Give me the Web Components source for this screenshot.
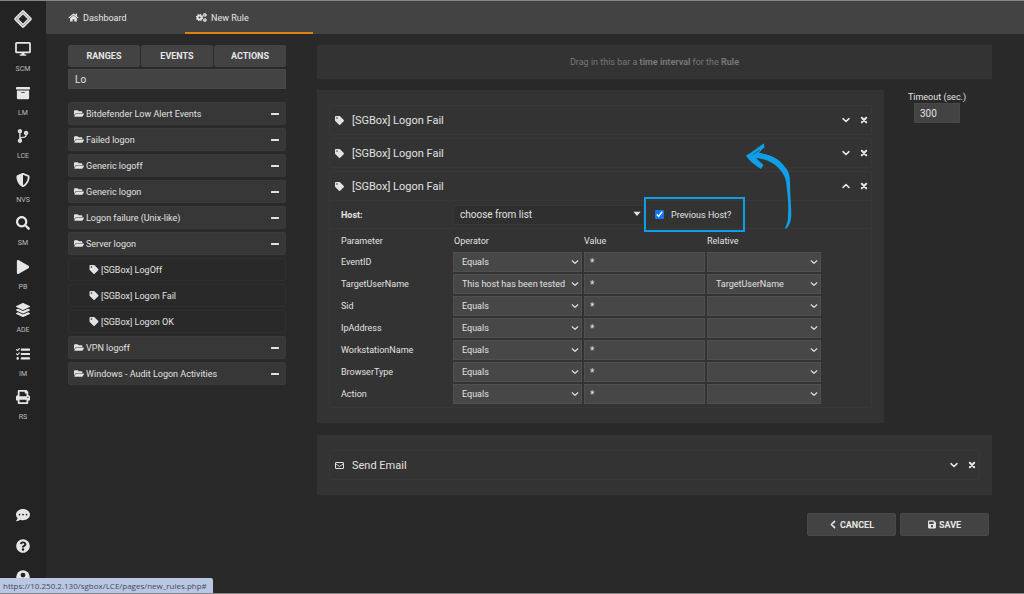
<!DOCTYPE html>
<html lang="en">
<head>
<meta charset="utf-8">
<title>New Rule</title>
<style>
  html, body { margin: 0; background: #292929; }
  body { font: 9px/12px Roboto, sans-serif; color: #e2e2e2; }
</style>
</head>
<body>
<rule-app></rule-app>
<script>
const define = (name, html, setup) => {
  const template = document.createElement('template');
  template.innerHTML = html;
  customElements.define(name, class extends HTMLElement {
    constructor() {
      super();
      this.attachShadow({ mode: 'open' }).append(template.content.cloneNode(true));
    }
    connectedCallback() { if (setup) setup(this, this.shadowRoot); }
  });
};

const gear = (x, y, r, teeth) => {
  const step = 2 * Math.PI * r / teeth;
  return `<circle cx="${x}" cy="${y}" r="${r}" fill="none" stroke="currentColor" stroke-width="${r * .5}" stroke-dasharray="${step * .55} ${step * .45}"/>
    <circle cx="${x}" cy="${y}" r="${r * .68}" fill="none" stroke="currentColor" stroke-width="${r * .62}"/>`;
};
const path = d => `<path d="${d}"/>`;
const line = (d, w) => `<path d="${d}" fill="none" stroke="currentColor" stroke-width="${w}" stroke-linecap="round" stroke-linejoin="round"/>`;

const ICONS = {
  logo: ['0 0 20 20', '<path d="M10 3 17 10 10 17 3 10Z" fill="none" stroke="currentColor" stroke-width="3.6" stroke-linejoin="round"/><path d="M10 3.2 16.8 10 10 16.8 3.2 10Z" fill="none" stroke="#6a6a6a" stroke-width=".6"/>'],
  desktop: ['0 0 576 512', '<rect x="32" y="32" width="512" height="350" rx="24" fill="none" stroke="currentColor" stroke-width="64"/><path d="M240 400h96l16 60h56v44H168v-44h56z"/>'],
  archive: ['0 0 512 512', path('M32 448c0 17.7 14.3 32 32 32h384c17.7 0 32-14.3 32-32V160H32v288zm160-212c0-6.6 5.4-12 12-12h104c6.6 0 12 5.4 12 12v8c0 6.6-5.4 12-12 12H204c-6.6 0-12-5.4-12-12v-8zM480 32H32C14.3 32 0 46.3 0 64v48c0 8.8 7.2 16 16 16h480c8.8 0 16-7.2 16-16V64c0-17.7-14.3-32-32-32z')],
  branch: ['0 0 384 512', path('M384 144c0-44.2-35.8-80-80-80s-80 35.8-80 80c0 36.4 24.3 67.1 57.5 76.8-.6 16.1-4.2 28.5-11 36.9-15.4 19.2-49.3 22.4-85.2 25.7-28.2 2.6-57.4 5.4-81.3 16.9v-144c32.5-10.2 56-40.5 56-76.3 0-44.2-35.8-80-80-80S0 35.8 0 80c0 35.8 23.5 66.1 56 76.3v199.3C23.5 365.9 0 396.2 0 432c0 44.2 35.8 80 80 80s80-35.8 80-80c0-34-21.2-63.1-51.2-74.6 3.1-5.2 7.8-9.8 14.9-13.4 16.2-8.2 40.4-10.4 66.1-12.8 42.2-3.9 90-8.4 118.2-43.4 14-17.4 21.1-39.8 21.6-67.9 31.6-10.8 54.4-40.7 54.4-75.9zM80 64c8.8 0 16 7.2 16 16s-7.2 16-16 16-16-7.2-16-16 7.2-16 16-16zm0 384c-8.8 0-16-7.2-16-16s7.2-16 16-16 16 7.2 16 16-7.2 16-16 16zm224-320c8.8 0 16 7.2 16 16s-7.2 16-16 16-16-7.2-16-16 7.2-16 16-16z')],
  shield: ['0 0 512 512', path('M466.5 83.7l-192-80a48.15 48.15 0 0 0-36.9 0l-192 80C27.7 91.1 16 108.6 16 128c0 198.5 114.5 335.7 221.5 380.3 11.8 4.9 25.1 4.9 36.9 0C360.1 472.6 496 349.3 496 128c0-19.4-11.7-36.9-29.5-44.3zM256.1 446.3l-.1-381 175.9 73.3c-3.3 151.4-82.1 261.1-175.8 307.7z')],
  search: ['0 0 512 512', path('M505 442.7L405.3 343c-4.5-4.5-10.6-7-17-7H372c27.6-35.3 44-79.7 44-128C416 93.1 322.9 0 208 0S0 93.1 0 208s93.1 208 208 208c48.3 0 92.7-16.4 128-44v16.3c0 6.4 2.5 12.5 7 17l99.7 99.7c9.4 9.4 24.6 9.4 33.9 0l28.3-28.3c9.4-9.4 9.4-24.6.1-34zM208 336c-70.7 0-128-57.2-128-128 0-70.7 57.2-128 128-128 70.7 0 128 57.2 128 128 0 70.7-57.2 128-128 128z')],
  play: ['0 0 448 512', path('M424.4 214.7L72.4 6.6C43.8-10.3 0 6.1 0 47.9V464c0 37.5 40.7 60.1 72.4 41.3l352-208c31.4-18.5 31.5-64.1 0-82.6z')],
  layers: ['0 0 512 512', path('M12.41 148.02l232.94 105.67c6.8 3.09 14.49 3.09 21.29 0l232.94-105.67c16.55-7.51 16.55-32.52 0-40.03L266.65 2.31a25.607 25.607 0 0 0-21.29 0L12.41 107.98c-16.55 7.51-16.55 32.53 0 40.04zm487.18 88.28l-58.09-26.33-161.64 73.27c-7.56 3.43-15.59 5.17-23.86 5.17s-16.29-1.74-23.86-5.17L70.51 209.97l-58.1 26.33c-16.55 7.5-16.55 32.5 0 40l232.94 105.59c6.8 3.08 14.49 3.08 21.29 0L499.59 276.3c16.55-7.5 16.55-32.5 0-40zm0 127.8l-57.87-26.23-161.86 73.37c-7.56 3.43-15.59 5.17-23.86 5.17s-16.29-1.74-23.86-5.17L70.29 337.87 12.41 364.1c-16.55 7.5-16.55 32.5 0 40l232.94 105.59c6.8 3.08 14.49 3.08 21.29 0L499.59 404.1c16.55-7.5 16.55-32.5 0-40z')],
  tasks: ['0 0 512 512', '<rect x="176" y="56" width="336" height="80" rx="16"/><rect x="176" y="216" width="336" height="80" rx="16"/><rect x="176" y="376" width="336" height="80" rx="16"/><circle cx="62" cy="416" r="46"/>' + line('M20 92l36 36L124 56M20 252l36 36 68-72', 40)],
  print: ['0 0 512 512', path('M448 192V77.25c0-8.49-3.37-16.62-9.37-22.63L393.37 9.37c-6-6-14.14-9.37-22.63-9.37H96C78.33 0 64 14.33 64 32v160c-35.35 0-64 28.65-64 64v112c0 8.84 7.16 16 16 16h48v96c0 17.67 14.33 32 32 32h320c17.67 0 32-14.33 32-32v-96h48c8.84 0 16-7.16 16-16V256c0-35.35-28.65-64-64-64zm-64 256H128v-96h256v96zm0-224H128V64h192v48c0 8.84 7.16 16 16 16h48v96zm48 72c-13.25 0-24-10.75-24-24 0-13.26 10.75-24 24-24s24 10.74 24 24c0 13.25-10.75 24-24 24z')],
  chat: ['0 0 512 512', path('M256 32C114.6 32 0 125.1 0 240c0 49.6 21.4 95 57 130.7C44.5 421.1 2.7 466 2.2 466.5c-2.2 2.3-2.8 5.7-1.5 8.7S4.8 480 8 480c66.3 0 116-31.8 140.6-51.4 32.7 12.3 69 19.4 107.4 19.4 141.4 0 256-93.1 256-208S397.4 32 256 32z') + '<g fill="#232323"><circle cx="128" cy="240" r="32"/><circle cx="256" cy="240" r="32"/><circle cx="384" cy="240" r="32"/></g>'],
  help: ['0 0 512 512', path('M504 256c0 136.997-111.043 248-248 248S8 392.997 8 256C8 119.083 119.043 8 256 8s248 111.083 248 248zM262.655 90c-54.497 0-89.255 22.957-116.549 63.758-3.536 5.286-2.353 12.415 2.715 16.258l34.699 26.31c5.205 3.947 12.621 3.008 16.665-2.122 17.864-22.658 30.113-35.797 57.303-35.797 20.429 0 45.698 13.148 45.698 32.958 0 14.976-12.363 22.667-32.534 33.976C247.128 238.528 216 254.941 216 296v4c0 6.627 5.373 12 12 12h56c6.627 0 12-5.373 12-12v-1.333c0-28.462 83.186-29.647 83.186-106.667 0-58.002-60.165-102-116.531-102zM256 338c-25.365 0-46 20.635-46 46 0 25.364 20.635 46 46 46s46-20.636 46-46c0-25.365-20.635-46-46-46z')],
  user: ['0 0 512 512', '<circle cx="256" cy="256" r="248"/><g fill="#232323"><circle cx="256" cy="184" r="88"/><path d="M104 384c20-62 70-88 96-88 36 14 76 14 112 0 26 0 76 26 96 88-80 88-224 88-304 0z"/></g>'],
  home: ['0 0 576 512', path('M280.37 148.26L96 300.11V464a16 16 0 0 0 16 16l112.06-.29a16 16 0 0 0 15.92-16V368a16 16 0 0 1 16-16h64a16 16 0 0 1 16 16v95.64a16 16 0 0 0 16 16.05L464 480a16 16 0 0 0 16-16V300L295.67 148.26a12.19 12.19 0 0 0-15.3 0zM571.6 251.47L488 182.56V44.05a12 12 0 0 0-12-12h-56a12 12 0 0 0-12 12v72.61L318.47 43a48 48 0 0 0-61 0L4.34 251.47a12 12 0 0 0-1.6 16.9l25.5 31A12 12 0 0 0 45.15 301l235.22-193.74a12.19 12.19 0 0 1 15.3 0L530.9 301a12 12 0 0 0 16.9-1.6l25.5-31a12 12 0 0 0-1.7-16.93z')],
  cogs: ['0 0 640 512', gear(206, 256, 168, 8) + gear(512, 110, 96, 6) + gear(512, 402, 96, 6)],
  folder: ['0 0 576 512', path('M572.694 292.093L500.27 416.248A63.997 63.997 0 0 1 444.989 448H45.025c-18.523 0-30.064-20.093-20.731-36.093l72.424-124.155A64 64 0 0 1 152 256h399.964c18.523 0 30.064 20.093 20.73 36.093zM152 224h328v-48c0-26.51-21.49-48-48-48H272l-64-64H48C21.49 64 0 85.49 0 112v278.046l69.077-118.418C86.214 242.25 117.989 224 152 224z')],
  tag: ['0 0 512 512', path('M0 252.118V48C0 21.49 21.49 0 48 0h204.118a48 48 0 0 1 33.941 14.059l211.882 211.882c18.745 18.745 18.745 49.137 0 67.882L293.823 497.941c-18.745 18.745-49.137 18.745-67.882 0L14.059 286.059A48 48 0 0 1 0 252.118zM112 64c-26.51 0-48 21.49-48 48s21.49 48 48 48 48-21.49 48-48-21.49-48-48-48z')],
  minus: ['0 0 8 8', '<rect y="3" width="8" height="2" rx=".5"/>'],
  down: ['0 0 8 8', line('M1 2.7 4 5.5 7 2.7', 1.6)],
  up: ['0 0 8 8', line('M1 5.5 4 2.7 7 5.5', 1.6)],
  left: ['0 0 8 8', line('M5.6 .9 2.4 4 5.6 7.1', 1.6)],
  close: ['0 0 8 8', line('M1.8 1.8 6.2 6.2M6.2 1.8 1.8 6.2', 2)],
  thin: ['0 0 8 8', line('M1.2 2.8 4 5.4 6.8 2.8', 1.2)],
  caret: ['0 0 8 8', path('M.4 1.8h7.2L4 6z')],
  mail: ['0 0 18 16', '<rect x="1" y="2" width="16" height="12" rx="1" fill="none" stroke="currentColor" stroke-width="2"/>' + line('M2 5 9 10 16 5', 1.8)],
  save: ['0 0 448 512', path('M433.941 129.941l-83.882-83.882A48 48 0 0 0 316.118 32H48C21.49 32 0 53.49 0 80v352c0 26.51 21.49 48 48 48h352c26.51 0 48-21.49 48-48V163.882a48 48 0 0 0-14.059-33.941zM224 416c-35.346 0-64-28.654-64-64 0-35.346 28.654-64 64-64s64 28.654 64 64c0 35.346-28.654 64-64 64zm96-304.52V212c0 6.627-5.373 12-12 12H76c-6.627 0-12-5.373-12-12V108c0-6.627 5.373-12 12-12h228.52c3.183 0 6.235 1.264 8.485 3.515l3.48 3.48A11.996 11.996 0 0 1 320 111.48z')]
};

define('ui-icon', `<style>
  :host { display: inline-flex; flex: none; width: 9px; height: 9px; }
  svg { width: 100%; height: 100%; fill: currentColor; overflow: visible; }
</style><span style="display:contents"></span>`, (el, root) => {
  const [box, body] = ICONS[el.getAttribute('name')];
  root.querySelector('span').innerHTML = `<svg viewBox="${box}" aria-hidden="true">${body}</svg>`;
});

define('nav-item', `<style>
  :host { display: block; }
  a { display: flex; flex-direction: column; align-items: center; gap: 6px; color: #e6e6e6; text-decoration: none; }
  ui-icon { width: 16px; height: 14px; }
  span { font-size: 7px; line-height: 14px; color: #bdbdbd; }
  :host(:not([label])) span { display: none; }
</style><a href="#"><ui-icon name="logo"></ui-icon><span></span></a>`, (el, root) => {
  const icon = document.createElement('ui-icon');
  icon.setAttribute('name', el.getAttribute('icon'));
  root.querySelector('ui-icon').replaceWith(icon);
  root.querySelector('span').textContent = el.getAttribute('label') || '';
  root.querySelector('a').setAttribute('aria-label', el.getAttribute('label') || el.getAttribute('icon'));
});

define('app-sidebar', `<style>
  :host { display: flex; flex-direction: column; align-items: center; box-sizing: border-box; background: #232323; padding: 8px 0 9px; }
  .logo { width: 20px; height: 20px; color: #e0e0e0; }
  nav { display: flex; flex-direction: column; justify-content: space-between; height: 382px; margin-top: 13px; }
  footer { display: flex; flex-direction: column; gap: 17px; margin-top: auto; }
</style>
<ui-icon class="logo" name="logo"></ui-icon>
<nav>
  <nav-item icon="desktop" label="SCM"></nav-item>
  <nav-item icon="archive" label="LM"></nav-item>
  <nav-item icon="branch" label="LCE"></nav-item>
  <nav-item icon="shield" label="NVS"></nav-item>
  <nav-item icon="search" label="SM"></nav-item>
  <nav-item icon="play" label="PB"></nav-item>
  <nav-item icon="layers" label="ADE"></nav-item>
  <nav-item icon="tasks" label="IM"></nav-item>
  <nav-item icon="print" label="RS"></nav-item>
</nav>
<footer>
  <nav-item icon="chat"></nav-item>
  <nav-item icon="help"></nav-item>
  <nav-item icon="user"></nav-item>
</footer>`);

define('header-tab', `<style>
  :host { display: block; width: 128px; }
  a { display: flex; align-items: center; gap: 4px; box-sizing: border-box; height: 33px; padding: 2px 11px 0; border-bottom: 2px solid transparent; color: #e6e6e6; text-decoration: none; }
  :host([active]) a { border-color: #e08210; }
  ::slotted(ui-icon) { width: 11px; }
</style><a href="#"><slot></slot></a>`);

define('app-header', `<style>
  :host { display: flex; height: 33px; padding-left: 11px; background: #434343; }
</style>
<header-tab><ui-icon name="home"></ui-icon>Dashboard</header-tab>
<header-tab active><ui-icon name="cogs"></ui-icon>New Rule</header-tab>`);

define('action-button', `<style>
  :host { display: block; flex: 1; }
  button { display: flex; align-items: center; justify-content: center; gap: 3px; width: 100%; height: 23px; padding: 0; border: 1px solid #484848; border-radius: 2px; background: #434343; color: #e6e6e6; font: bold 9px/12px Roboto, sans-serif; }
  :host([flat]) button { height: 22px; border-color: #434343; }
</style><button type="button"><slot></slot></button>`);

define('folder-item', `<style>
  :host { display: flex; align-items: center; gap: 2px; box-sizing: border-box; height: 23px; padding: 0 6px 0 5px; border: 1px solid #3a3a3a; border-radius: 2px; background: #373737; }
  :host([child]) { padding-left: 20px; background: transparent; border-color: #2f2f2f; }
  .main { width: 10px; }
  .fold { margin-left: auto; width: 8px; height: 8px; }
</style>`, (el, root) => {
  const child = el.hasAttribute('child');
  root.querySelectorAll(':not(style)').forEach(n => n.remove());
  root.innerHTML += `<ui-icon class="main" name="${child ? 'tag' : 'folder'}"></ui-icon><span><slot></slot></span>${child ? '' : '<ui-icon class="fold" name="minus"></ui-icon>'}`;
});

define('filter-panel', `<style>
  :host { display: block; }
  .modes { display: flex; gap: 1px; }
  input { display: block; box-sizing: border-box; width: 100%; height: 20px; margin: 2px 0 13px; padding: 0 6px; border: 1px solid #484848; background: #434343; color: #e2e2e2; font: 10px/14px Roboto, sans-serif; }
  .list { display: flex; flex-direction: column; gap: 3px; }
</style>
<div class="modes">
  <action-button flat>RANGES</action-button><action-button flat>EVENTS</action-button><action-button flat>ACTIONS</action-button>
</div>
<input type="text" value="Lo" aria-label="Filter events">
<div class="list">
  <folder-item>Bitdefender Low Alert Events</folder-item>
  <folder-item>Failed logon</folder-item>
  <folder-item>Generic logoff</folder-item>
  <folder-item>Generic logon</folder-item>
  <folder-item>Logon failure (Unix-like)</folder-item>
  <folder-item>Server logon</folder-item>
  <folder-item child>[SGBox] LogOff</folder-item>
  <folder-item child>[SGBox] Logon Fail</folder-item>
  <folder-item child>[SGBox] Logon OK</folder-item>
  <folder-item>VPN logoff</folder-item>
  <folder-item>Windows - Audit Logon Activities</folder-item>
</div>`);

define('select-field', `<style>
  :host { display: block; position: relative; }
  select { appearance: none; display: block; box-sizing: border-box; width: 100%; height: 20px; margin: 0; padding: 0 16px 0 8px; border: 1px solid #505050; border-radius: 0; background: #474747; color: #e2e2e2; font: 9px/12px Roboto, sans-serif; }
  ui-icon { position: absolute; right: 3px; top: 6px; width: 8px; height: 8px; pointer-events: none; }
</style><select><option></option></select><ui-icon name="thin"></ui-icon>`, (el, root) => {
  root.querySelector('option').textContent = el.getAttribute('value');
  root.querySelector('select').setAttribute('aria-label', el.getAttribute('label'));
});

define('param-table', `<style>
  :host { display: block; padding: 0 7px 1px 9px; }
  table { border-spacing: 2px; table-layout: fixed; width: 484px; }
  th, td { padding: 0; text-align: left; font-weight: normal; }
  thead th { height: 19px; }
  tbody th, tbody td { height: 20px; }
  .op { padding-left: 1px; }
  input { display: block; box-sizing: border-box; width: 100%; height: 20px; margin: 0; padding: 0 5px; border: 1px solid #505050; background: #474747; color: #e2e2e2; font: 10px/14px Roboto, sans-serif; }
</style>
<table>
  <colgroup><col style="width:110px"><col style="width:129px"><col style="width:121px"><col style="width:114px"></colgroup>
  <thead><tr><th scope="col">Parameter</th><th scope="col" class="op">Operator</th><th scope="col">Value</th><th scope="col">Relative</th></tr></thead>
  <tbody></tbody>
</table>`, (el, root) => {
  root.querySelector('tbody').innerHTML = ['EventID', 'TargetUserName', 'Sid', 'IpAddress', 'WorkstationName', 'BrowserType', 'Action'].map(name => {
    const tested = name === 'TargetUserName';
    return `<tr><th scope="row">${name}</th>
      <td><select-field label="${name} operator" value="${tested ? 'This host has been tested' : 'Equals'}"></select-field></td>
      <td><input type="text" value="*" aria-label="${name} value"></td>
      <td><select-field label="${name} relative" value="${tested ? name : ''}"></select-field></td></tr>`;
  }).join('');
});

define('host-row', `<style>
  :host { display: flex; align-items: center; height: 27px; padding-left: 11px; border-top: 1px solid #383838; border-bottom: 1px solid #383838; }
  .name { width: 112px; font-weight: bold; }
  .pick { position: relative; width: 191px; }
  select { appearance: none; display: block; box-sizing: border-box; width: 100%; height: 20px; margin: 0; padding: 0 16px 0 6px; border: 1px solid #383838; border-radius: 0; background: #2f2f2f; color: #e2e2e2; font: 10px/14px Roboto, sans-serif; }
  .pick ui-icon { position: absolute; right: 3px; top: 5px; width: 8px; height: 8px; pointer-events: none; }
  .previous { display: flex; align-items: center; gap: 7px; box-sizing: border-box; width: 101px; height: 35px; margin: -4px 0; padding-left: 9px; border: 2px solid #0f9fe6; }
  .previous input { width: 9px; height: 9px; margin: 0; accent-color: #0a75ff; }
</style>
<label class="name" for="host">Host:</label>
<div class="pick"><select id="host"><option>choose from list</option></select><ui-icon name="caret"></ui-icon></div>
<label class="previous"><input type="checkbox" checked>Previous Host?</label>`);

define('rule-card', `<style>
  :host { display: block; position: relative; border: 1px solid #383838; border-radius: 2px; }
  header { display: flex; align-items: center; height: 28px; padding: 0 3px 0 5px; }
  h2 { flex: 1; margin: 0 0 0 8px; padding-top: 2px; font: 11px/14px Roboto, sans-serif; }
  button { display: flex; padding: 0; border: 0; background: none; color: #e6e6e6; margin-left: 10px; }
  button ui-icon { width: 8px; height: 8px; }
</style>
<header><ui-icon class="kind" name="tag"></ui-icon><h2></h2><button type="button" class="fold"></button><button type="button" aria-label="Remove"><ui-icon name="close"></ui-icon></button></header>
<slot></slot>`, (el, root) => {
  root.querySelector('h2').textContent = el.getAttribute('title-text');
  const kind = document.createElement('ui-icon');
  kind.setAttribute('name', el.getAttribute('icon') || 'tag');
  root.querySelector('.kind').replaceWith(kind);
  const fold = root.querySelector('.fold');
  const open = el.hasAttribute('open');
  fold.setAttribute('aria-label', open ? 'Collapse' : 'Expand');
  fold.innerHTML = `<ui-icon name="${open ? 'up' : 'down'}"></ui-icon>`;
});

define('sketch-arrow', `<style>
  :host { display: block; position: absolute; left: 415px; top: -30px; width: 50px; height: 88px; pointer-events: none; }
  svg { display: block; width: 50px; height: 88px; }
</style>
<svg viewBox="0 0 50 88" fill="#0f9fe6" aria-hidden="true">
  <path d="M1 13.500C8 10 14 4 19 1.500L19.500 5.500C17 7 16 9 14 11C25 12 35 17 40 25C44 29 45 34 45 41C45 55 47 68 46 77C45 82 43 85 41 87L40 86C42 82 43 79 43 74C44 60 42 49 41 39C39 30 30 20 19 17.500C16 16.500 13 16.500 11 16L18.500 23L16 27C11 24 5 20 1 13.500Z"/>
  <path d="M8 12.500 15 8" stroke="#333" stroke-width=".6"/>
</svg>`);

define('timeout-field', `<style>
  :host { display: flex; flex-direction: column; align-items: center; box-sizing: border-box; width: 108px; padding: 1px 2px 0 0; }
  input { box-sizing: border-box; width: 46px; height: 20px; padding: 0 5px; border: 1px solid #484848; background: #434343; color: #e2e2e2; font: 10px/14px Roboto, sans-serif; }
</style><label for="timeout">Timeout (sec.)</label><input id="timeout" type="text" value="300">`);

define('drop-panel', `<style>
  :host { display: flex; flex-direction: column; gap: 3px; box-sizing: border-box; padding: 15px 12px; background: #333; }
</style><slot></slot>`);

define('rule-editor', `<style>
  :host { display: block; min-width: 0; }
  .range { margin: 0 0 11px; padding: 11px; text-align: center; background: #333; color: #777; }
  .events { display: flex; align-items: flex-start; margin-bottom: 12px; }
  .events drop-panel { flex: 1; }
  .actions { display: flex; justify-content: flex-end; gap: 4px; margin: 18px 3px 0; }
  .actions action-button { flex: none; width: 89px; }
  .actions ui-icon { width: 8px; }
</style>
<p class="range">Drag in this bar a <b>time interval</b> for the <b>Rule</b></p>
<div class="events">
  <drop-panel>
    <rule-card title-text="[SGBox] Logon Fail"></rule-card>
    <rule-card title-text="[SGBox] Logon Fail"></rule-card>
    <rule-card title-text="[SGBox] Logon Fail" open>
      <host-row></host-row>
      <param-table></param-table>
      <sketch-arrow></sketch-arrow>
    </rule-card>
  </drop-panel>
  <timeout-field></timeout-field>
</div>
<drop-panel><rule-card title-text="Send Email" icon="mail"></rule-card></drop-panel>
<div class="actions">
  <action-button><ui-icon name="left"></ui-icon>CANCEL</action-button>
  <action-button><ui-icon name="save"></ui-icon>SAVE</action-button>
</div>`);

define('link-status', `<style>
  :host { display: block; position: fixed; left: 0; bottom: 1px; box-sizing: border-box; height: 15px; padding: 0 6px 0 3px; border-radius: 0 2px 0 0; background: #b9c7e3; color: #444c5c; font: 8px/16px "Open Sans", sans-serif; }
</style><slot></slot>`);

define('rule-app', `<style>
  :host { display: grid; grid-template: 33px 1fr / 46px 1fr; box-sizing: border-box; min-height: 100vh; border-top: 1px solid #858585; border-bottom: 1px solid #858585; }
  app-sidebar { grid-row: 1 / 3; }
  main { display: grid; grid-template-columns: 218px 1fr; gap: 31px; align-items: start; padding: 11px 32px 20px 22px; }
</style>
<app-sidebar></app-sidebar>
<app-header></app-header>
<main><filter-panel></filter-panel><rule-editor></rule-editor></main>
<link-status>https://10.250.2.130/sgbox/LCE/pages/new_rules.php#</link-status>`);
</script>
</body>
</html>
